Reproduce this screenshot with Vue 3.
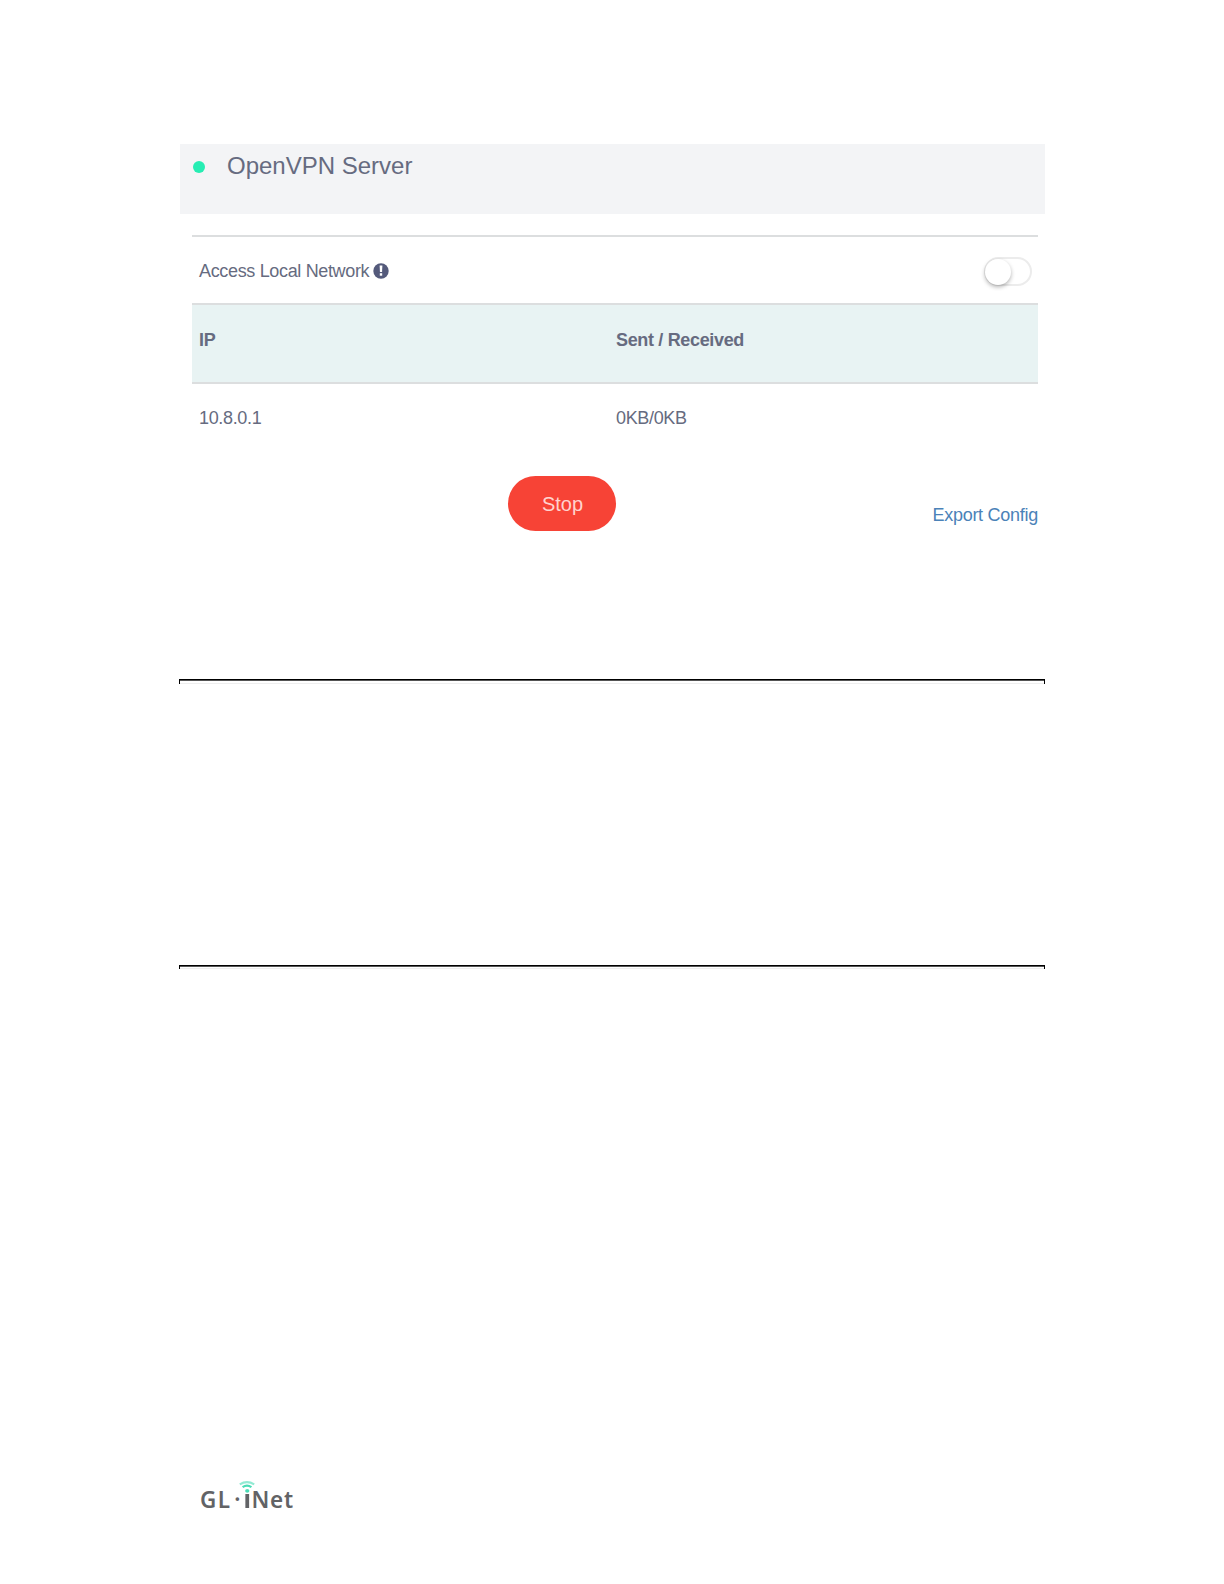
<template>
  <div class="page">
    <section class="panel">
      <header class="panel-head">
        <span class="status-dot"></span>
        <h1 class="title">OpenVPN Server</h1>
      </header>

      <div class="body">
        <div class="row access">
          <span class="access-label">Access Local Network</span>
          <svg class="info" viewBox="0 0 16 16">
            <circle cx="8" cy="8" r="7.7" fill="#545a7b" />
            <path d="M6.6 2.6h2.8l-.35 6.4h-2.1z" fill="#fff" />
            <rect x="6.8" y="10.2" width="2.4" height="2.5" fill="#fff" />
          </svg>
          <button class="toggle" aria-label="Access Local Network">
            <span class="knob"></span>
          </button>
        </div>
        <div class="row head">
          <span class="ip-head">IP</span>
          <span class="traffic-head">Sent / Received</span>
        </div>
        <div v-for="c in clients" :key="c.ip" class="row client">
          <span class="ip">{{ c.ip }}</span>
          <span class="traffic">{{ c.traffic }}</span>
        </div>
      </div>

      <div class="actions">
        <button class="stop">Stop</button>
        <a class="export">Export Config</a>
      </div>
    </section>

    <div class="rule"></div>
    <div class="rule second"></div>

    <footer class="logo">
      <span class="gl">GL</span>
      <span class="dot">·</span>
      <span class="i">i
        <svg class="wifi" viewBox="0 0 16 8">
          <path d="M.8 3.4Q8 -1 15.2 3.4" opacity=".6" />
          <path d="M3.6 6.2Q8 3 12.4 6.2" />
        </svg>
      </span>
      <span class="net">Net</span>
    </footer>
  </div>
</template>

<script setup>
const clients = [{ ip: '10.8.0.1', traffic: '0KB/0KB' }]
</script>

<style>
body {
  background: #fff;
}
</style>

<style scoped>
.page {
  box-sizing: border-box;
  width: 1224px;
  height: 1584px;
  padding: 144px 179px 0;
  display: flex;
  flex-direction: column;
  font-family: "Liberation Sans", Arial, sans-serif;
  font-size: 18px;
  color: #666b80;
  overflow: hidden;
}

.panel {
  height: 535px;
  flex-shrink: 0;
}

.panel-head {
  box-sizing: border-box;
  height: 70px;
  margin: 0 0 0 1px;
  padding: 7px 0 0 13px;
  display: flex;
  align-items: flex-start;
  background: #f3f4f6;
}

.status-dot {
  width: 12px;
  height: 12px;
  margin-top: 10px;
  border-radius: 50%;
  background: #26edb3;
}

.title {
  margin: 0 0 0 22px;
  font-size: 24px;
  line-height: 30px;
  font-weight: 400;
}

.body {
  margin: 21px 7px 0 13px;
}

.row {
  box-sizing: border-box;
  display: flex;
  align-items: center;
  padding-left: 7px;
  border-top: 2px solid #dcdedf;
  letter-spacing: -0.34px;
  white-space: nowrap;
}

.access {
  height: 68px;
  padding: 3px 6px 0 7px;
}

.info {
  width: 16px;
  height: 16px;
  margin: 0 0 1px 4px;
}

.toggle {
  box-sizing: border-box;
  width: 48px;
  height: 29px;
  margin-left: auto;
  padding: 0;
  border: 2px solid #ececec;
  border-radius: 15px;
  background: #fff;
}

.knob {
  display: block;
  width: 26px;
  height: 26px;
  margin: -1px;
  border-radius: 50%;
  background: #fff;
  box-shadow: 0 2px 4px rgba(0, 0, 0, 0.3);
}

.head {
  height: 79px;
  padding-bottom: 7px;
  background: #e8f3f3;
  font-weight: 700;
}

.client {
  height: 73px;
  padding-bottom: 2px;
}

.ip-head,
.ip {
  width: 417px;
}

.actions {
  display: flex;
  align-items: flex-start;
  margin: 21px 7px 0 329px;
}

.stop {
  width: 108px;
  height: 55px;
  padding: 2px 0 0 1px;
  border: 0;
  border-radius: 28px;
  background: #f74336;
  color: #ffd3cf;
  font: 20px "Liberation Sans", Arial, sans-serif;
}

.export {
  margin: 28px 0 0 auto;
  line-height: 22px;
  letter-spacing: -0.27px;
  color: #4b82b8;
}

.rule {
  box-sizing: border-box;
  height: 5px;
  flex-shrink: 0;
  border: solid #000;
  border-width: 1px 1px 0;
  box-shadow: inset 0 1px #555, inset 0 -1px #eee;
}

.second {
  margin-top: 281px;
  height: 4px;
}

.logo {
  display: flex;
  align-items: baseline;
  margin: 513px 0 0 21px;
  font: 600 22.5px/32px "Noto Sans", sans-serif;
  color: #626366;
}

.gl {
  letter-spacing: 1.4px;
}

.dot {
  width: 12px;
  text-align: center;
}

.i {
  position: relative;
  width: 8px;
  font-size: 25px;
  font-weight: 700;
  color: transparent;
  background: linear-gradient(#4adcb6 0 11px, #626366 11px);
  -webkit-background-clip: text;
  background-clip: text;
}

.wifi {
  position: absolute;
  left: -4px;
  top: -1px;
  width: 16px;
  height: 8px;
  fill: none;
  stroke: #4adcb6;
  stroke-width: 2.2;
}

.net {
  letter-spacing: 0.8px;
}
</style>
